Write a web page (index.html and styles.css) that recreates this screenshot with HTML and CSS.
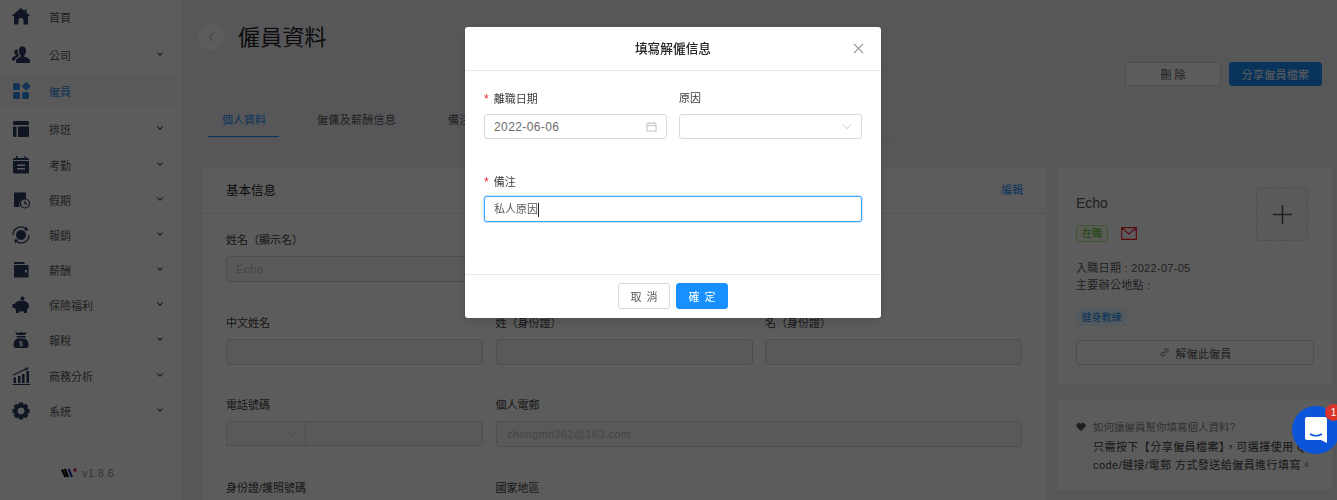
FILE: index.html
```html
<!DOCTYPE html>
<html lang="zh-Hant">
<head>
<meta charset="utf-8">
<title>僱員資料</title>
<link rel="stylesheet" href="styles.css">
</head>
<body>
<div class="app">
  <aside class="sidebar">
    <nav class="menu">
      <a class="item first"><svg class="ic" viewBox="0 0 20 20"><path d="M10 1 L13.500 4 V2.500 H15.500 V5.700 L19 8.600 L18 9.600 L17 8.800 V17.500 H3 V8.800 L2 9.600 L1 8.600 Z M7.500 17.500 H12.500 V13 Q12.500 11 10 11 Q7.500 11 7.500 13 Z" fill-rule="evenodd"/></svg><span>首頁</span></a>
      <a class="item gap"><svg class="ic" viewBox="0 0 20 20"><path d="M11.500 1.500 C14.500 1.500 15.500 4 15 7 C14.700 8.800 13.800 10 13.200 10.600 V11.800 C15 12.600 19 13 19 15.500 V18 H5 V15.500 C5 13.500 8 12.600 9.800 11.800 V10.600 C9 10 8 8.500 7.800 6.500 C7.500 3.500 8.800 1.500 11.500 1.500Z M6.500 4.500 C7 4.300 6.500 6 6.800 8 C7 9 7.500 10 8.300 10.800 V11.300 C6 12 4 13 3.800 15.500 H1 V13.500 C1 12 3.500 11.400 4.600 11 V10 C3.500 9 3.200 7.300 3.500 6 C3.800 5 5 4.500 6.500 4.500Z"/></svg><span>公司</span><i class="chev"></i></a>
      <a class="item active"><svg class="ic" viewBox="0 0 20 20"><rect x="2" y="2" width="7" height="7" rx="1.500"/><rect x="12" y="2" width="6.400" height="6.400" rx="1" transform="rotate(45 15.200 5.200)"/><rect x="2" y="11" width="7" height="7" rx="1.500"/><rect x="11" y="11" width="7" height="7" rx="1.500"/></svg><span>僱員</span></a>
      <a class="item gap"><svg class="ic" viewBox="0 0 20 20"><path d="M3.500 2 H16.500 Q18 2 18 3.500 V6 H2 V3.500 Q2 2 3.500 2Z M2 7.500 H5.500 V18 H3.500 Q2 18 2 16.500Z M7 7.500 H18 V16.500 Q18 18 16.500 18 H7Z"/></svg><span>排班</span><i class="chev"></i></a>
      <a class="item mid"><svg class="ic" viewBox="0 0 20 20"><path d="M5 1 H6.500 V3 H13.500 V1 H15 V3 H16.500 Q18 3 18 4.500 V17 Q18 18.500 16.500 18.500 H3.500 Q2 18.500 2 17 V4.500 Q2 3 3.500 3 H5Z M2 5 V6 H18 V5Z M6 9.500 V11 H14 V9.500Z M6 13 V14.500 H14 V13Z" fill-rule="evenodd"/></svg><span>考勤</span><i class="chev"></i></a>
      <a class="item"><svg class="ic" viewBox="0 0 20 20"><path d="M3 2.500 H15 V9 A5.500 5.500 0 0 0 9 17 H3Z"/><circle cx="14" cy="13.500" r="4.500" class="st"/><path d="M14 11 V13.700 H16" class="st"/></svg><span>假期</span><i class="chev"></i></a>
      <a class="item"><svg class="ic" viewBox="0 0 20 20"><circle cx="10" cy="10" r="5"/><path d="M2 10 A8 8 0 0 1 15.500 4.200 M18 10 A8 8 0 0 1 4.500 15.800" class="st"/><path d="M15.500 1.500 L17 5.500 L13 5.500Z M4.500 18.500 L3 14.500 L7 14.500Z"/></svg><span>報銷</span><i class="chev"></i></a>
      <a class="item"><svg class="ic" viewBox="0 0 20 20"><path d="M3 2 H13 L14 4 H3Z M3 5 H17.500 V17.500 H3Z M14 10 V12.500 H16 V10Z" fill-rule="evenodd"/></svg><span>薪酬</span><i class="chev"></i></a>
      <a class="item"><svg class="ic" viewBox="0 0 20 20"><circle cx="11.500" cy="3.500" r="2"/><ellipse cx="10.500" cy="11" rx="7.500" ry="5.500"/><path d="M1.500 9 H4 V13 H1.500Z M5 15 H8 V18 H5Z M13 15 H16 V18 H13Z"/></svg><span>保險福利</span><i class="chev"></i></a>
      <a class="item"><svg class="ic" viewBox="0 0 20 20"><path d="M4 2 L7.500 3 L10 2 L12.500 3 L16 2 L14 5 H6Z M5.500 6 H14.500 V7.500 H5.500Z M6 8.500 H14 C16.500 10 17.500 12 17.500 15 Q17.500 18 15 18 H5 Q2.500 18 2.500 15 C2.500 12 3.500 10 6 8.500Z"/><text x="10" y="16" class="dollar">$</text></svg><span>報稅</span><i class="chev"></i></a>
      <a class="item mid"><svg class="ic" viewBox="0 0 20 20"><path d="M1.500 18 H19 V19 H1.500Z M2.500 11.500 H5 V17 H2.500Z M7 10 H9.500 V17 H7Z M11 8 H13.500 V17 H11Z M15.500 5 H18 V17 H15.500Z"/><path d="M2 9 L15 3" class="st"/><path d="M18 1.500 L13.800 1.800 L15.600 4.800Z"/></svg><span>商務分析</span><i class="chev"></i></a>
      <a class="item"><svg class="ic" viewBox="0 0 20 20"><path d="M8 1.500 H12 L12.600 3.800 L14.800 2.700 L17.300 5.200 L16.200 7.400 L18.500 8 V12 L16.200 12.600 L17.300 14.800 L14.800 17.300 L12.600 16.200 L12 18.500 H8 L7.400 16.200 L5.200 17.300 L2.700 14.800 L3.800 12.600 L1.500 12 V8 L3.800 7.400 L2.700 5.200 L5.200 2.700 L7.400 3.800Z M10 6.500 A3.500 3.500 0 1 0 10.010 6.500Z" fill-rule="evenodd"/></svg><span>系統</span><i class="chev"></i></a>
    </nav>
    <div class="version">
      <svg class="vlogo" viewBox="0 0 16 10"><path d="M1 1.500 L4.500 9" class="l1"/><path d="M3.800 1 L7 9" class="l1"/><path d="M7.500 1 L11 9" class="l2"/><circle cx="14" cy="2" r="1.800" class="l3"/></svg>
      <span>v1.8.6</span>
    </div>
  </aside>

  <main class="main">
    <header class="head">
      <div class="title-row">
        <span class="back"><svg viewBox="0 0 10 14"><path d="M7.500 2 L2.500 7 L7.500 12"/></svg></span>
        <h1>僱員資料</h1>
      </div>
      <div class="actions">
        <button class="btn del">刪 除</button>
        <button class="btn share">分享僱員檔案</button>
      </div>
    </header>
    <div class="tabs">
      <a class="tab on">個人資料</a>
      <a class="tab">僱傭及薪酬信息</a>
      <a class="tab">備注</a>
    </div>
    <div class="columns">
      <section class="card info">
        <div class="card-head"><b>基本信息</b><a>編輯</a></div>
        <div class="form">
          <div class="field"><label>姓名（顯示名）</label><div class="inp ph">Echo</div></div>
          <div class="field"><label>&nbsp;</label></div>
          <div class="field"><label>&nbsp;</label></div>
          <div class="field"><label>中文姓名</label><div class="inp"></div></div>
          <div class="field"><label>姓（身份證）</label><div class="inp"></div></div>
          <div class="field"><label>名（身份證）</label><div class="inp"></div></div>
          <div class="field"><label>電話號碼</label>
            <div class="inp phone"><span class="code"><svg class="chevsvg" viewBox="0 0 12 8"><path d="M1 1.500 L6 6.500 L11 1.500"/></svg></span></div></div>
          <div class="field wide"><label>個人電郵</label><div class="inp ph mail">zhongmti362@163.com</div></div>
          <div class="field"><label>身份證/護照號碼</label></div>
          <div class="field"><label>國家地區</label></div>
        </div>
      </section>
      <div class="side">
        <section class="card profile">
          <div class="pro-top">
            <div>
              <div class="name">Echo</div>
              <div class="tags">
                <span class="tag-green">在職</span>
                <svg class="env" viewBox="0 0 16 13"><path d="M.700 .700 H15.300 V12.300 H.700Z M.700 .700 L8 7 L15.300 .700"/></svg>
              </div>
            </div>
            <div class="upload"><svg viewBox="0 0 22 22"><path d="M11 1 V21 M1 11 H21"/></svg></div>
          </div>
          <p class="meta">入職日期 : 2022-07-05<br>主要辦公地點 :</p>
          <span class="tag-blue">健身教練</span>
          <button class="fire"><svg viewBox="0 0 12 12"><path d="M5 7 L7.500 4.500 M4.500 5.500 L2.500 7.500 A2 2 0 0 0 5 10 L7 8 M5.500 3.800 L7.500 2 A2 2 0 0 1 10 4.500 L8 6.500"/></svg>解僱此僱員</button>
        </section>
        <section class="card tip">
          <div class="tip-q"><svg viewBox="0 0 12 11"><path d="M6 10.500 L1 5.500 A3 3 0 0 1 6 2 A3 3 0 0 1 11 5.500Z"/></svg>如何讓僱員幫你填寫個人資料?</div>
          <p>只需按下【分享僱員檔案】，可選擇使用 QR<br>code/鏈接/電郵 方式發送給僱員進行填寫。</p>
        </section>
      </div>
    </div>
  </main>
</div>

<div class="mask"></div>

<div class="modal">
  <div class="m-head">填寫解僱信息<svg class="close" viewBox="0 0 12 12"><path d="M1 1 L11 11 M11 1 L1 11"/></svg></div>
  <div class="m-body">
    <div class="m-row">
      <div class="m-field"><label><em>*</em>離職日期</label>
        <div class="m-inp date">2022-06-06<svg class="cal" viewBox="0 0 12 12"><path d="M1 2.500 H11 V11 H1Z M1 5 H11 M3.500 1 V3 M8.500 1 V3"/></svg></div></div>
      <div class="m-field"><label>原因</label>
        <div class="m-inp"><svg class="sel" viewBox="0 0 12 8"><path d="M1 1.500 L6 6.500 L11 1.500"/></svg></div></div>
    </div>
    <div class="m-field note"><label><em>*</em>備注</label>
      <div class="m-inp focus">私人原因<i class="caret"></i></div></div>
  </div>
  <div class="m-foot">
    <button class="mb">取 消</button>
    <button class="mb ok">確 定</button>
  </div>
</div>

<div class="bubble">
  <svg viewBox="0 0 24 26"><path d="M3 0 H21 Q23 0 23 2 V26 L17 23 H3 Q1 23 1 21 V2 Q1 0 3 0Z" class="b1"/><path d="M6 17 Q12 20.500 18 17" class="b2"/></svg>
  <span class="badge">1</span>
</div>
</body>
</html>
```

FILE: styles.css
```css
* { box-sizing: border-box; }
html, body { margin: 0; height: 500px; overflow: hidden; }
body {
  font-family: "Liberation Sans", "Noto Sans CJK TC", sans-serif;
  font-size: 11px;
  color: #595959;
  background: #f0f2f5;
}
button { font-family: inherit; cursor: pointer; }
p, h1 { margin: 0; }

.app { display: flex; height: 500px; overflow: hidden; }

/* sidebar */
.sidebar {
  width: 182px; flex: none; background: #fff; display: flex; flex-direction: column;
  box-shadow: 1px 0 3px rgba(0,0,0,.05);
}
.menu { display: flex; flex-direction: column; padding-right: 3px; }
.item {
  display: flex; align-items: center; height: 32px; margin-top: 3px; flex: none;
  padding-left: 11px; color: #595959; font-size: 11px; position: relative;
}
.item.first { margin-top: 1px; }
.item.gap { margin-top: 6px; }
.item.mid { margin-top: 4px; }
.item.active { background: #f5f5f5; color: #2d8ee8; margin-top: 4px; }
.ic { width: 20px; height: 20px; fill: #2b3a5e; margin-right: 18px; flex: none; }
.active .ic { fill: #2d8ee8; }
.ic .st { stroke: #2b3a5e; fill: none; stroke-width: 1.2; }
.dollar { fill: #fff; font-size: 7px; text-anchor: middle; font-family: "Liberation Sans", sans-serif; font-weight: 700; }
.chev {
  position: absolute; right: 17px; top: 12px; width: 4px; height: 4px;
  border-right: 1px solid #444; border-bottom: 1px solid #444; transform: rotate(45deg);
}
.version { display: flex; align-items: center; margin-top: 40px; padding-left: 61px; color: #8c8c8c; font-size: 11px; letter-spacing: .4px; }
.vlogo { width: 16px; height: 10px; margin-right: 5px; fill: none; stroke-width: 2.2; }
.l1 { stroke: #000; } .l2 { stroke: #1f3fb0; } .l3 { fill: #d0264e; stroke: none; }

/* main */
.main { flex: 1; min-width: 0; display: flex; flex-direction: column; }
.head { height: 104px; flex: none; padding: 24px 15px 0 16px; display: flex; justify-content: space-between; }
.title-row { display: flex; align-items: flex-start; }
.back {
  width: 26px; height: 26px; border-radius: 50%; background: #fff; display: flex;
  align-items: center; justify-content: center; margin-right: 14px;
}
.back svg { width: 9px; height: 12px; fill: none; stroke: #999; stroke-width: 1; }
h1 { font-size: 22px; font-weight: 400; line-height: 27px; color: #262626; letter-spacing: .2px; }
.actions { display: flex; gap: 8px; padding-top: 38px; }
.btn { height: 24px; border-radius: 3px; font-size: 11px; padding: 0; }
.del { width: 96px; background: #fff; border: 1px solid #d9d9d9; color: #595959; }
.share { width: 93px; background: #1890ff; border: 1px solid #1890ff; color: #fff; letter-spacing: .3px; }

.tabs { height: 33px; flex: none; display: flex; border-bottom: 1px solid #e8e8e8; padding-left: 26px; }
.tab { height: 33px; padding: 7px 14px 0; font-size: 11px; color: #595959; margin-right: 24px; letter-spacing: .3px; white-space: nowrap; }
.tab.on { color: #1890ff; border-bottom: 1px solid #1890ff; width: 71px; letter-spacing: 0; }

.columns { display: flex; gap: 8px; padding: 30px 4px 0 19px; }
.card { background: #fff; border: 1px solid #f0f0f0; }
.info { width: 847px; flex: none; height: 400px; }
.card-head {
  height: 46px; padding: 0 24px 3px 24px; border-bottom: 1px solid #e8e8e8;
  display: flex; align-items: center; justify-content: space-between;
}
.card-head b { font-weight: 400; font-size: 12.500px; color: #262626; }
.card-head a { color: #1890ff; }
.form {
  display: grid; grid-template-columns: 257px 257px 257px; column-gap: 12.500px;
  padding: 18px 24px 0 24px; grid-auto-rows: 82.600px;
}
.field label { display: block; line-height: 16px; height: 24px; color: #404040; font-size: 11px; }
.field.wide { grid-column: span 2; }
.inp { height: 26px; border: 1px solid #d9d9d9; border-radius: 3px; background: #f5f5f5; line-height: 24px; padding: 0 9px; }
.ph { color: #bfbfbf; font-size: 11.500px; letter-spacing: .3px; }
.mail { font-size: 11px; letter-spacing: .4px; padding: 0 10px; }
.phone { display: flex; padding: 0; height: 25px; }
.code { width: 79px; border-right: 1px solid #d9d9d9; display: flex; align-items: center; justify-content: flex-end; padding-right: 8px; }
.chevsvg { width: 9px; height: 6px; fill: none; stroke: #bfbfbf; }

.side { width: 277px; flex: none; display: flex; flex-direction: column; gap: 14px; }
.profile { height: 218px; padding: 18px 19px 0; }
.pro-top { display: flex; justify-content: space-between; padding-right: 5px; }
.name { font-size: 14px; line-height: 16px; margin-top: 9px; color: #595959; }
.tags { display: flex; align-items: center; gap: 13px; margin-top: 14px; }
.tag-green { width: 32px; height: 17px; border: 1px solid #b7eb8f; border-radius: 2px; background: #f6ffed; color: #52c41a; font-size: 10px; line-height: 15px; text-align: center; }
.env { width: 16px; height: 13px; fill: none; stroke: #f5222d; stroke-width: 1.200; }
.upload { width: 52px; height: 54px; margin-top: 1px; border: 1px dashed #d9d9d9; border-radius: 3px; background: #fafafa; display: flex; align-items: center; justify-content: center; }
.upload svg { width: 21px; height: 21px; fill: none; stroke: #595959; stroke-width: 1.600; }
.meta { margin-top: 18px; font-size: 11px; line-height: 17px; color: #595959; letter-spacing: .3px; }
.tag-blue { display: block; width: 51px; height: 17px; margin-top: 15px; background: #e6f7ff; color: #1890ff; font-size: 10px; line-height: 17px; text-align: center; border-radius: 2px; }
.fire { display: flex; align-items: center; justify-content: center; width: 238px; height: 25px; margin-top: 14px; background: #fff; border: 1px solid #d9d9d9; border-radius: 3px; color: #595959; font-size: 11px; padding: 0; letter-spacing: .2px; }
.fire svg { width: 11px; height: 11px; fill: none; stroke: #595959; margin-right: 6px; }
.tip { height: 92px; padding: 19px 10px 0 19px; }
.tip-q { display: flex; align-items: center; font-size: 10.500px; color: #8c8c8c; line-height: 16px; margin-bottom: 3px; }
.tip-q svg { width: 10px; height: 10px; fill: #595959; margin-right: 7px; }
.tip p { padding-left: 17px; font-size: 11px; line-height: 18px; color: #404040; white-space: nowrap; letter-spacing: .45px; }

/* overlays */
.mask { position: fixed; inset: 0; background: rgba(0,0,0,.64); }
.modal {
  position: fixed; left: 465px; top: 27px; width: 416px; height: 291px; background: #fff;
  border-radius: 3px; box-shadow: 0 4px 12px rgba(0,0,0,.15); display: flex; flex-direction: column;
}
.m-head {
  height: 44px; flex: none; border-bottom: 1px solid #e8e8e8; position: relative; display: flex;
  align-items: center; justify-content: center; font-size: 12.700px; color: #262626; font-weight: 500; padding-bottom: 2px;
}
.close { position: absolute; right: 17px; top: 16px; width: 11px; height: 11px; fill: none; stroke: #8c8c8c; stroke-width: 1.100; }
.m-body { flex: 1; padding: 18px 19px 0; }
.m-row { display: flex; gap: 12px; }
.m-field { flex: 1; }
.m-field label { display: block; height: 18px; line-height: 18px; font-size: 11px; color: #3a3a3a; margin-bottom: 7px; }
.m-field label:has(em) { padding-top: 1px; }
.m-field em { color: #f5222d; font-style: normal; margin-right: 5px; font-family: "Liberation Sans", sans-serif; font-size: 12px; line-height: 0; }
.m-inp {
  position: relative; height: 25px; border: 1px solid #d9d9d9; border-radius: 3px; padding: 0 9px;
  line-height: 23px; color: #595959; font-size: 11px; background: #fff; display: flex; align-items: center; letter-spacing: .3px;
}
.date { font-size: 12px; letter-spacing: .4px; padding-top: 2px; color: #6b6b6b; }
.cal { position: absolute; right: 9px; top: 6px; width: 11px; height: 11px; fill: none; stroke: #bfbfbf; }
.sel { position: absolute; right: 9px; top: 8px; width: 10px; height: 7px; fill: none; stroke: #bfbfbf; }
.note { margin-top: 33px; }
.note label { margin-bottom: 6px; }
.focus { height: 26px; border-color: #40a9ff; box-shadow: 0 0 0 1px rgba(24,144,255,.25); letter-spacing: 0; padding-top: 1px; }
.caret { width: 1px; height: 14px; background: #262626; }
.m-foot { height: 44px; flex: none; border-top: 1px solid #e8e8e8; display: flex; justify-content: center; gap: 6px; padding-top: 8px; }
.mb { width: 52px; height: 26px; border-radius: 3px; background: #fff; border: 1px solid #d9d9d9; color: #595959; font-size: 11px; padding: 0 0 0 1px; letter-spacing: 1px; }
.mb.ok { background: #1890ff; border-color: #1890ff; color: #fff; }

.bubble {
  position: fixed; left: 1292px; top: 406px; width: 48px; height: 48px; border-radius: 50%;
  background: #0a55d8; display: flex; align-items: center; justify-content: center;
}
.bubble svg { width: 24px; height: 26px; }
.b1 { fill: #fff; }
.b2 { fill: none; stroke: #0a55d8; stroke-width: 1.500; }
.badge {
  position: absolute; left: 33px; top: -2px; width: 17px; height: 17px; border-radius: 50%;
  background: #d9342b; color: #fff; font-size: 10px; line-height: 17px; text-align: center;
}
```
